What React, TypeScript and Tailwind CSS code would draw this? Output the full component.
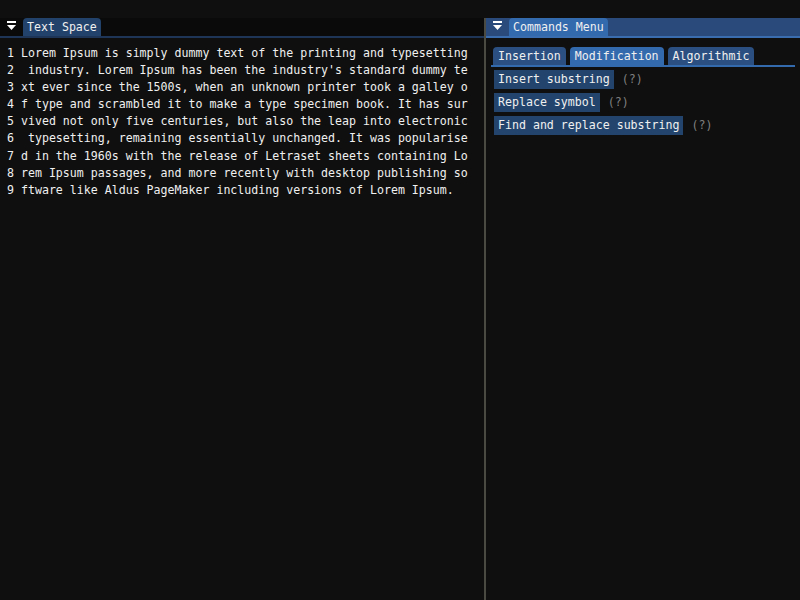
const LINES = [
  "Lorem Ipsum is simply dummy text of the printing and typesetting",
  " industry. Lorem Ipsum has been the industry's standard dummy te",
  "xt ever since the 1500s, when an unknown printer took a galley o",
  "f type and scrambled it to make a type specimen book. It has sur",
  "vived not only five centuries, but also the leap into electronic",
  " typesetting, remaining essentially unchanged. It was popularise",
  "d in the 1960s with the release of Letraset sheets containing Lo",
  "rem Ipsum passages, and more recently with desktop publishing so",
  "ftware like Aldus PageMaker including versions of Lorem Ipsum.",
];

const TABS = ["Insertion", "Modification", "Algorithmic"];
const ACTIONS = ["Insert substring", "Replace symbol", "Find and replace substring"];

function MenuArrow() {
  return (
    <svg width="9" height="10" viewBox="0 0 9 10" className="shrink-0">
      <rect x="0" y="0" width="9" height="2" fill="#ffffff" />
      <polygon points="0,4 9,4 4.5,9" fill="#ffffff" />
    </svg>
  );
}

export default function App() {
  return (
    <div
      className="flex h-[600px] w-[800px] flex-col overflow-hidden bg-[#0f0f0f] pt-[18px] text-[11.6px] leading-[17px] text-[#f0f0f0]"
      style={{ fontFamily: '"DejaVu Sans Mono", "Liberation Mono", monospace' }}
    >
      <div className="flex min-h-0 flex-1">
        {/* text space window */}
        <div className="flex w-[484px] flex-col">
          <div className="flex h-[20px] items-end border-b-2 border-[#1e3558] bg-[#0a0a0a] pl-[7px]">
            <div className="mb-[5px] mr-[7px]"><MenuArrow /></div>
            <div className="flex h-[18px] items-center rounded-t-[4px] bg-[#23426b] px-[4px]">Text Space</div>
          </div>
          <div className="flex flex-col pl-[7px] pt-[7px] leading-[17.1px]">
            {LINES.map((l, i) => (
              <div key={i} className="whitespace-pre">{`${i + 1} ${l}`}</div>
            ))}
          </div>
        </div>

        <div className="w-[2px] bg-[#4a4a42]" />

        {/* commands window */}
        <div className="flex flex-1 flex-col">
          <div className="flex h-[20px] items-end border-b-2 border-[#3a6cb0] bg-[#294a7a] pl-[7px]">
            <div className="mb-[5px] mr-[7px]"><MenuArrow /></div>
            <div className="flex h-[18px] items-center rounded-t-[4px] bg-[#3369ad] px-[4px]">Commands Menu</div>
          </div>
          <div className="flex flex-col px-[5px] pt-[9px]">
            <div className="flex gap-[4px] border-b-2 border-[#3369ad] pl-[2px]">
              {TABS.map((t) => (
                <div
                  key={t}
                  className={`flex h-[18px] items-center rounded-t-[4px] px-[5px] ${t === "Modification" ? "bg-[#3369ad]" : "bg-[#2a4f80]"}`}
                >
                  {t}
                </div>
              ))}
            </div>
            <div className="mt-[3px] flex flex-col gap-[4px] pl-[3px]">
              {ACTIONS.map((a) => (
                <div key={a} className="flex items-center gap-[8px]">
                  <div className="flex h-[19px] items-center bg-[#23456d] px-[4px]">{a}</div>
                  <span className="text-[#808080]">(?)</span>
                </div>
              ))}
            </div>
          </div>
        </div>
      </div>
    </div>
  );
}
